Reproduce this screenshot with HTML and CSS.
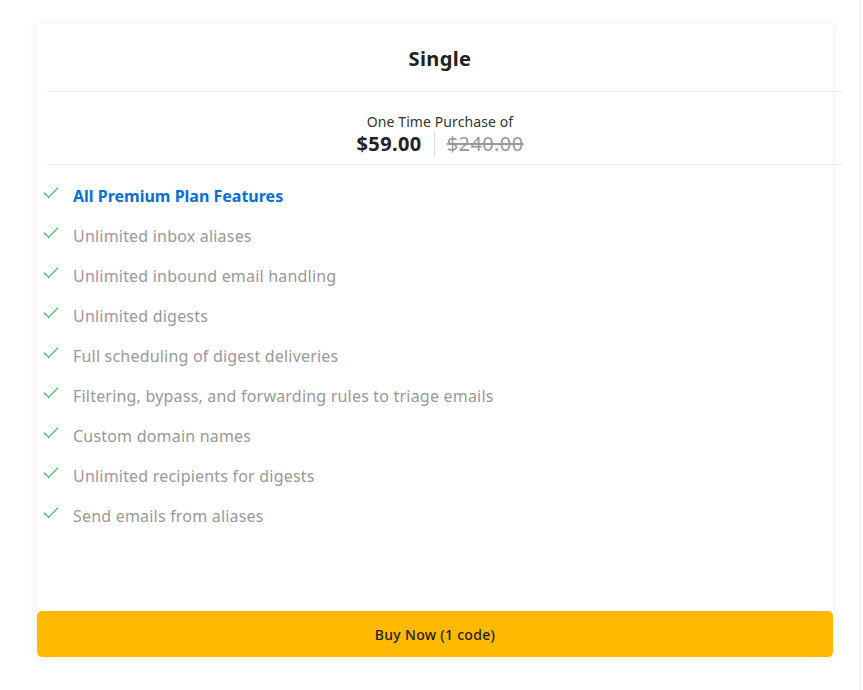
FILE: index.html
```html
<!DOCTYPE html>
<html lang="en">
<head>
    <meta charset="UTF-8">
    <meta name="viewport" content="width=device-width, initial-scale=1.0">
    <title>Single Plan</title>
    <link rel="stylesheet" href="styles.css">
</head>
<body>

<div class="page">
    <div class="plan">
        <div class="plan-head">
            <h2>Single</h2>
        </div>
        <div class="plan-price">
            <div class="price-label">One Time Purchase of</div>
            <div class="price-row">
                <span class="price-now">$59.00</span>
                <span class="price-old">$240.00</span>
            </div>
        </div>

        <ul class="features">
            <li class="highlight">All Premium Plan Features</li>
            <li>Unlimited inbox aliases</li>
            <li>Unlimited inbound email handling</li>
            <li>Unlimited digests</li>
            <li>Full scheduling of digest deliveries</li>
            <li>Filtering, bypass, and forwarding rules to triage emails</li>
            <li>Custom domain names</li>
            <li>Unlimited recipients for digests</li>
            <li>Send emails from aliases</li>
        </ul>

        <button class="buy">Buy Now (1 code)</button>
    </div>
</div>

</body>
</html>
```

FILE: styles.css
```css
body {
    font-family: "Noto Sans", Arial, sans-serif;
    margin: 0;
    padding: 0;
    background-color: white;
}

.page {
    width: 861px;
    min-height: 100vh;
    border-right: 1px solid #ececec;
    padding: 23px 0 0 37px;
    box-sizing: border-box;
}

.plan {
    width: 796px;
    background-color: white;
    border-radius: 4px;
    box-shadow: 0 0 10px rgba(0, 0, 0, 0.07);
}

.plan-head,
.plan-price {
    margin-left: 10px;
    width: 100%;
    border-bottom: 1px solid #ececec;
    text-align: center;
    box-sizing: border-box;
}

.plan-head {
    height: 69px;
    padding-top: 2px;
    display: flex;
    align-items: center;
    justify-content: center;
}
.plan-head h2 {
    margin: 0 0 0 -10px;
    font-size: 20px;
    font-weight: 700;
    letter-spacing: 0.4px;
    color: #222;
}

.plan-price {
    height: 73px;
    padding-top: 21px;
}
.price-label {
    margin-left: -10px;
    font-size: 14px;
    letter-spacing: 0.1px;
    color: #333;
    line-height: 18px;
}
.price-row {
    margin-left: -10px;
    display: flex;
    justify-content: center;
    align-items: center;
    line-height: 26px;
    font-size: 20px;
    letter-spacing: 0.4px;
}
.price-now {
    font-weight: 700;
    color: #222;
    padding-right: 12px;
    border-right: 1px solid #ddd;
}
.price-old {
    color: #999;
    text-decoration: line-through;
    padding-left: 12px;
}

.features {
    list-style: none;
    margin: 0;
    padding: 11px 0 0 6px;
    height: 446px;
    box-sizing: border-box;
}
.features li {
    position: relative;
    padding-left: 30px;
    height: 40px;
    line-height: 40px;
    font-size: 16px;
    letter-spacing: 0.2px;
    color: #999;
}
.features li::before {
    content: "";
    position: absolute;
    left: 1px;
    top: 11px;
    width: 13px;
    height: 6px;
    border-left: 1.8px solid #22b540;
    border-bottom: 1.8px solid #22b540;
    transform: rotate(-45deg);
}
.features li.highlight {
    color: #0a6fd6;
    font-weight: 700;
    letter-spacing: 0;
}

.buy {
    display: block;
    width: 100%;
    height: 46px;
    border: none;
    border-radius: 5px;
    background-color: #ffb900;
    color: #222;
    font-family: inherit;
    font-size: 14px;
    letter-spacing: 0.3px;
    font-weight: 500;
    cursor: pointer;
}
```
